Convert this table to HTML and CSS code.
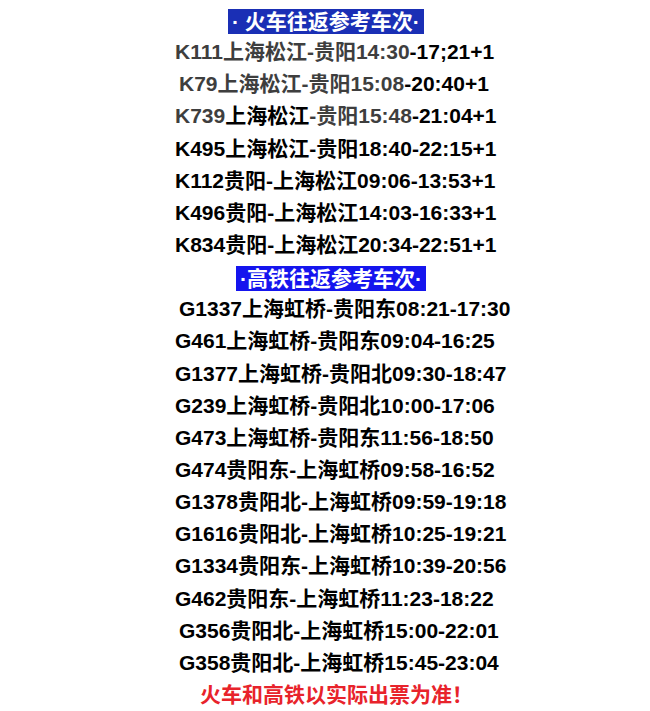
FILE: index.html
```html
<!DOCTYPE html>
<html lang="zh">
<head>
<meta charset="utf-8">
<link rel="stylesheet" href="styles.css">
</head>
<body>
<div class="list">
  <div class="line"><span class="hd hd1">· 火车往返参考车次·</span></div>
  <div class="line"><span class="g">K111上海松江-贵阳14:30</span>-17;21+1</div>
  <div class="line ind"><span class="g">K79上海松江-贵阳15:08</span>-20:40+1</div>
  <div class="line"><span class="g">K739</span>上海松江<span class="g">-贵阳15:48</span>-21:04+1</div>
  <div class="line">K495上海松江-贵阳18:40-22:15+1</div>
  <div class="line">K112贵阳-上海松江09:06-13:53+1</div>
  <div class="line">K496贵阳-上海松江14:03-16:33+1</div>
  <div class="line">K834贵阳-上海松江20:34-22:51+1</div>
  <div class="line"><span class="hd hd2">·高铁往返参考车次·</span></div>
  <div class="line ind">G1337上海虹桥-贵阳东08:21-17:30</div>
  <div class="line">G461上海虹桥-贵阳东09:04-16:25</div>
  <div class="line">G1377上海虹桥-贵阳北09:30-18:47</div>
  <div class="line">G239上海虹桥-贵阳北10:00-17:06</div>
  <div class="line">G473上海虹桥-贵阳东11:56-18:50</div>
  <div class="line">G474贵阳东-上海虹桥09:58-16:52</div>
  <div class="line">G1378贵阳北-上海虹桥09:59-19:18</div>
  <div class="line">G1616贵阳北-上海虹桥10:25-19:21</div>
  <div class="line">G1334贵阳东-上海虹桥10:39-20:56</div>
  <div class="line">G462贵阳东-上海虹桥11:23-18:22</div>
  <div class="line ind">G356贵阳北-上海虹桥15:00-22:01</div>
  <div class="line ind">G358贵阳北-上海虹桥15:45-23:04</div>
  <div class="line note">火车和高铁以实际出票为准！</div>
</div>
</body>
</html>
```

FILE: styles.css
```css
html, body {
  margin: 0;
  padding: 0;
  background: #ffffff;
}

.list {
  display: flex;
  flex-direction: column;
  align-items: flex-start;
  padding: 4px 0 0 175px;
  font-family: "Liberation Sans", "Noto Sans CJK SC", sans-serif;
  font-weight: bold;
  font-size: 21px;
  color: #000000;
}

.line {
  height: 32.15px;
  line-height: 32.15px;
  white-space: nowrap;
}

.ind {
  margin-left: 4px;
}

.g {
  color: #3e3e3e;
}

.hd {
  display: inline-block;
  height: 25px;
  line-height: 25px;
  color: #ffffff;
  padding: 0 4px;
  vertical-align: middle;
}

.hd1 {
  margin-left: 53px;
  background: #1a2fb5;
}

.hd2 {
  margin-left: 61px;
  background: #1515ee;
}

.note {
  margin-left: 25px;
  color: #e8232b;
}
```
